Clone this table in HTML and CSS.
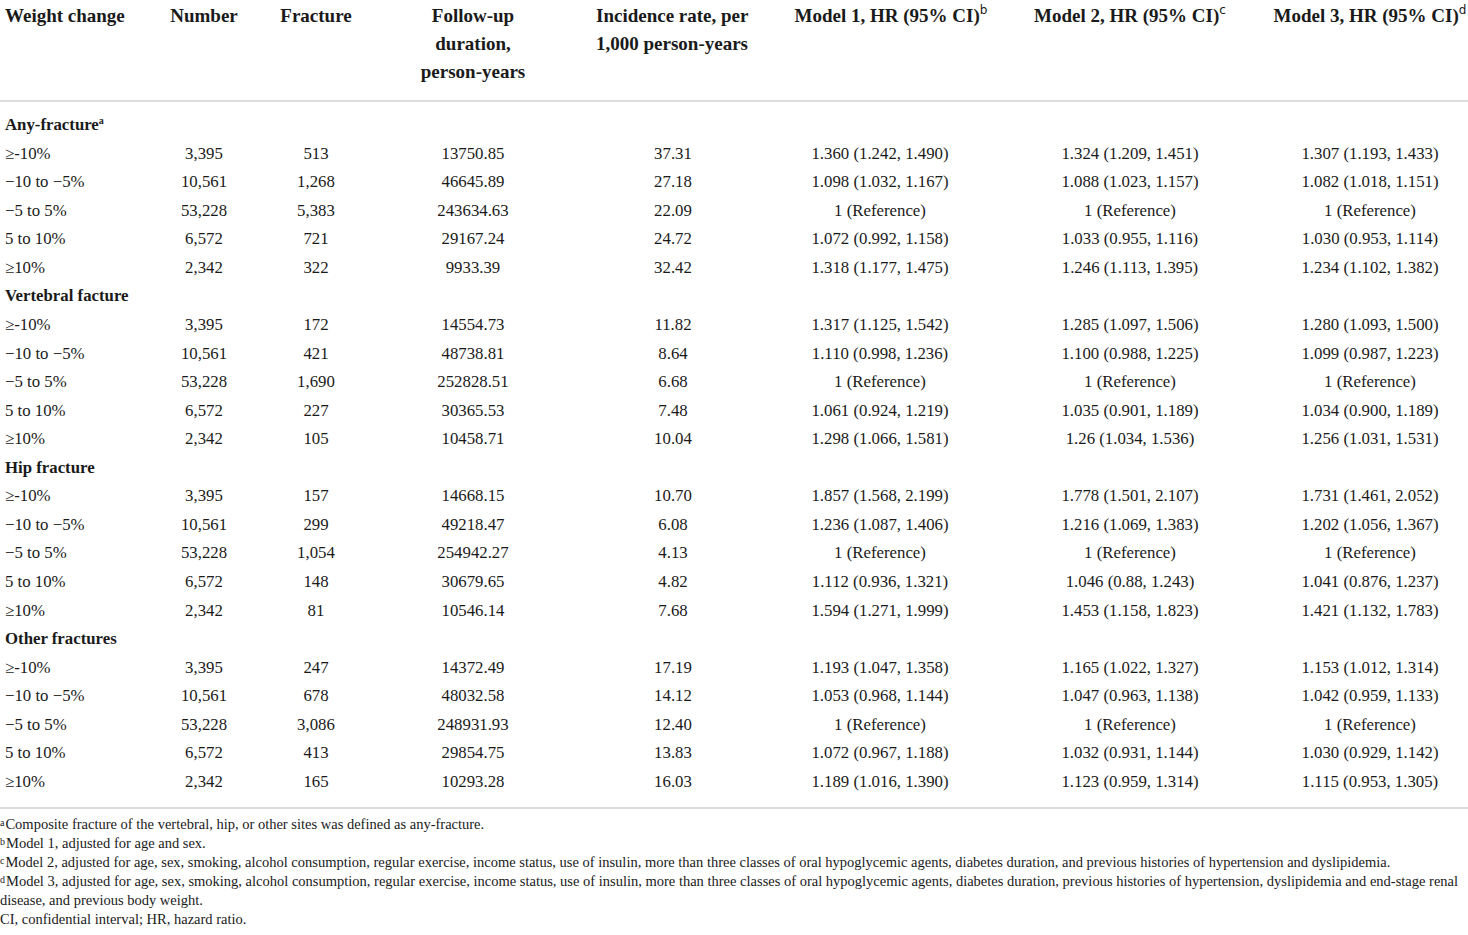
FILE: index.html
```html
<!DOCTYPE html>
<html lang="en">
<head>
    <meta charset="UTF-8">
    <title>Weight change and fracture risk</title>
    <link rel="stylesheet" href="styles.css">
</head>
<body>
    <table class="data-table">
        <colgroup>
            <col class="col-label">
            <col class="col-number">
            <col class="col-fracture">
            <col class="col-follow">
            <col class="col-rate">
            <col class="col-m1">
            <col class="col-m2">
            <col class="col-m3">
        </colgroup>
        <thead>
            <tr>
                <th class="label">Weight change</th>
                <th>Number</th>
                <th>Fracture</th>
                <th>Follow-up<br>duration,<br>person-years</th>
                <th class="left">Incidence rate, per<br>1,000 person-years</th>
                <th class="shift">Model 1, HR (95% CI)<sup>b</sup></th>
                <th>Model 2, HR (95% CI)<sup>c</sup></th>
                <th>Model 3, HR (95% CI)<sup>d</sup></th>
            </tr>
        </thead>
        <tbody>
            <tr class="group first"><td class="label" colspan="8">Any-fracture<sup class="fn">a</sup></td></tr>
            <tr><td class="label">&ge;-10%</td><td>3,395</td><td>513</td><td>13750.85</td><td>37.31</td><td>1.360 (1.242, 1.490)</td><td>1.324 (1.209, 1.451)</td><td>1.307 (1.193, 1.433)</td></tr>
            <tr><td class="label">&minus;10 to &minus;5%</td><td>10,561</td><td>1,268</td><td>46645.89</td><td>27.18</td><td>1.098 (1.032, 1.167)</td><td>1.088 (1.023, 1.157)</td><td>1.082 (1.018, 1.151)</td></tr>
            <tr><td class="label">&minus;5 to 5%</td><td>53,228</td><td>5,383</td><td>243634.63</td><td>22.09</td><td>1 (Reference)</td><td>1 (Reference)</td><td>1 (Reference)</td></tr>
            <tr><td class="label">5 to 10%</td><td>6,572</td><td>721</td><td>29167.24</td><td>24.72</td><td>1.072 (0.992, 1.158)</td><td>1.033 (0.955, 1.116)</td><td>1.030 (0.953, 1.114)</td></tr>
            <tr><td class="label">&ge;10%</td><td>2,342</td><td>322</td><td>9933.39</td><td>32.42</td><td>1.318 (1.177, 1.475)</td><td>1.246 (1.113, 1.395)</td><td>1.234 (1.102, 1.382)</td></tr>

            <tr class="group"><td class="label" colspan="8">Vertebral facture</td></tr>
            <tr><td class="label">&ge;-10%</td><td>3,395</td><td>172</td><td>14554.73</td><td>11.82</td><td>1.317 (1.125, 1.542)</td><td>1.285 (1.097, 1.506)</td><td>1.280 (1.093, 1.500)</td></tr>
            <tr><td class="label">&minus;10 to &minus;5%</td><td>10,561</td><td>421</td><td>48738.81</td><td>8.64</td><td>1.110 (0.998, 1.236)</td><td>1.100 (0.988, 1.225)</td><td>1.099 (0.987, 1.223)</td></tr>
            <tr><td class="label">&minus;5 to 5%</td><td>53,228</td><td>1,690</td><td>252828.51</td><td>6.68</td><td>1 (Reference)</td><td>1 (Reference)</td><td>1 (Reference)</td></tr>
            <tr><td class="label">5 to 10%</td><td>6,572</td><td>227</td><td>30365.53</td><td>7.48</td><td>1.061 (0.924, 1.219)</td><td>1.035 (0.901, 1.189)</td><td>1.034 (0.900, 1.189)</td></tr>
            <tr><td class="label">&ge;10%</td><td>2,342</td><td>105</td><td>10458.71</td><td>10.04</td><td>1.298 (1.066, 1.581)</td><td>1.26 (1.034, 1.536)</td><td>1.256 (1.031, 1.531)</td></tr>

            <tr class="group"><td class="label" colspan="8">Hip fracture</td></tr>
            <tr><td class="label">&ge;-10%</td><td>3,395</td><td>157</td><td>14668.15</td><td>10.70</td><td>1.857 (1.568, 2.199)</td><td>1.778 (1.501, 2.107)</td><td>1.731 (1.461, 2.052)</td></tr>
            <tr><td class="label">&minus;10 to &minus;5%</td><td>10,561</td><td>299</td><td>49218.47</td><td>6.08</td><td>1.236 (1.087, 1.406)</td><td>1.216 (1.069, 1.383)</td><td>1.202 (1.056, 1.367)</td></tr>
            <tr><td class="label">&minus;5 to 5%</td><td>53,228</td><td>1,054</td><td>254942.27</td><td>4.13</td><td>1 (Reference)</td><td>1 (Reference)</td><td>1 (Reference)</td></tr>
            <tr><td class="label">5 to 10%</td><td>6,572</td><td>148</td><td>30679.65</td><td>4.82</td><td>1.112 (0.936, 1.321)</td><td>1.046 (0.88, 1.243)</td><td>1.041 (0.876, 1.237)</td></tr>
            <tr><td class="label">&ge;10%</td><td>2,342</td><td>81</td><td>10546.14</td><td>7.68</td><td>1.594 (1.271, 1.999)</td><td>1.453 (1.158, 1.823)</td><td>1.421 (1.132, 1.783)</td></tr>

            <tr class="group"><td class="label" colspan="8">Other fractures</td></tr>
            <tr><td class="label">&ge;-10%</td><td>3,395</td><td>247</td><td>14372.49</td><td>17.19</td><td>1.193 (1.047, 1.358)</td><td>1.165 (1.022, 1.327)</td><td>1.153 (1.012, 1.314)</td></tr>
            <tr><td class="label">&minus;10 to &minus;5%</td><td>10,561</td><td>678</td><td>48032.58</td><td>14.12</td><td>1.053 (0.968, 1.144)</td><td>1.047 (0.963, 1.138)</td><td>1.042 (0.959, 1.133)</td></tr>
            <tr><td class="label">&minus;5 to 5%</td><td>53,228</td><td>3,086</td><td>248931.93</td><td>12.40</td><td>1 (Reference)</td><td>1 (Reference)</td><td>1 (Reference)</td></tr>
            <tr><td class="label">5 to 10%</td><td>6,572</td><td>413</td><td>29854.75</td><td>13.83</td><td>1.072 (0.967, 1.188)</td><td>1.032 (0.931, 1.144)</td><td>1.030 (0.929, 1.142)</td></tr>
            <tr class="last"><td class="label">&ge;10%</td><td>2,342</td><td>165</td><td>10293.28</td><td>16.03</td><td>1.189 (1.016, 1.390)</td><td>1.123 (0.959, 1.314)</td><td>1.115 (0.953, 1.305)</td></tr>
        </tbody>
    </table>

    <div class="notes">
        <p><sup>a</sup>Composite fracture of the vertebral, hip, or other sites was defined as any-fracture.</p>
        <p><sup>b</sup>Model 1, adjusted for age and sex.</p>
        <p><sup>c</sup>Model 2, adjusted for age, sex, smoking, alcohol consumption, regular exercise, income status, use of insulin, more than three classes of oral hypoglycemic agents, diabetes duration, and previous histories of hypertension and dyslipidemia.</p>
        <p><sup>d</sup>Model 3, adjusted for age, sex, smoking, alcohol consumption, regular exercise, income status, use of insulin, more than three classes of oral hypoglycemic agents, diabetes duration, previous histories of hypertension, dyslipidemia and end-stage renal disease, and previous body weight.</p>
        <p>CI, confidential interval; HR, hazard ratio.</p>
    </div>
</body>
</html>
```

FILE: styles.css
```css
body {
    margin: 0;
    background-color: #fff;
    color: #1a1a1a;
    font-family: "Liberation Serif", "Times New Roman", serif;
}
.data-table {
    width: 1468px;
    border-collapse: collapse;
    table-layout: fixed;
    margin-top: 2px;
}
.col-label { width: 148px; }
.col-number { width: 112px; }
.col-fracture { width: 112px; }
.col-follow { width: 202px; }
.col-rate { width: 198px; }
.col-m1 { width: 216px; }
.col-m2 { width: 284px; }
.col-m3 { width: 196px; }

th {
    font-size: 19px;
    font-weight: bold;
    line-height: 28px;
    text-align: center;
    vertical-align: top;
    padding: 0 0 14px 0;
    border-bottom: 2px solid #dcdcdc;
    white-space: nowrap;
}
th.left {
    text-align: left;
    padding-left: 22px;
}
th.shift {
    padding-left: 22px;
}
th sup {
    font-family: "DejaVu Sans", sans-serif;
    font-weight: normal;
    font-size: 12px;
    vertical-align: 8px;
    line-height: 0;
}
td {
    font-size: 16.8px;
    line-height: 28.57px;
    text-align: center;
    padding: 0;
    white-space: nowrap;
}
.label {
    text-align: left;
    padding-left: 5px;
}
.group td {
    font-weight: bold;
}
.group.first td {
    padding-top: 9px;
}
.last td {
    padding-bottom: 10px;
    border-bottom: 2px solid #dcdcdc;
}
sup.fn {
    font-size: 10px;
    vertical-align: 6px;
    line-height: 0;
}
.notes {
    margin-top: 6px;
}
.notes p {
    margin: 0;
    font-size: 14.5px;
    line-height: 19px;
}
.notes sup {
    font-size: 10px;
    vertical-align: 3px;
    line-height: 0;
    margin-right: 1px;
}
```
